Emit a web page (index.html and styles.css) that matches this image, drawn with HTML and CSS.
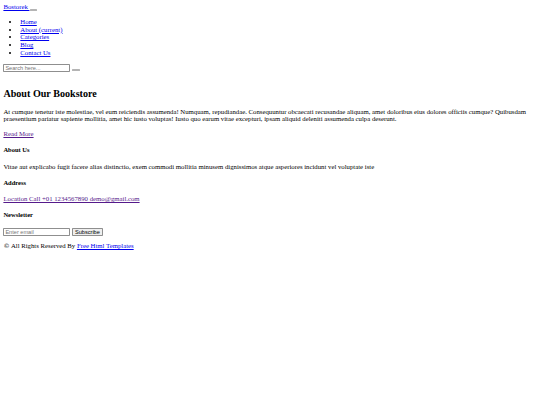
FILE: index.html
```html
<!DOCTYPE html>
<html lang="en">
<head>
<meta charset="utf-8">
<title>Bostorek</title>
<link rel="stylesheet" href="styles.css">
</head>
<body class="page">
<header class="header">
  <nav class="nav">
    <div class="brand-row"><a class="brand link" href="#">Bostorek </a><button class="toggler" type="button"></button></div>
    <ul class="menu">
      <li><a class="link" href="#">Home</a></li>
      <li><a class="link" href="#">About (current)</a></li>
      <li><a class="link" href="#">Categories</a></li>
      <li><a class="link" href="#">Blog</a></li>
      <li><a class="link" href="#">Contact Us</a></li>
    </ul>
    <form class="search">
      <input class="field" type="text" placeholder="Search here..."> <button class="toggler" type="button"></button>
    </form>
  </nav>
</header>
<section class="about">
  <h2 class="about-title">About Our Bookstore</h2>
  <p class="text">At cumque tenetur iste molestiae, vel eum reiciendis assumenda! Numquam, repudiandae. Consequuntur obcaecati recusandae aliquam, amet doloribus eius dolores officiis cumque? Quibusdam praesentium pariatur sapiente mollitia, amet hic iusto voluptas! Iusto quo earum vitae excepturi, ipsam aliquid deleniti assumenda culpa deserunt.</p>
  <a class="link visited" href="#">Read More</a>
</section>
<footer class="footer">
  <h5 class="foot-title">About Us</h5>
  <p class="text">Vitae aut explicabo fugit facere alias distinctio, exem commodi mollitia minusem dignissimos atque asperiores incidunt vel voluptate iste</p>
  <h5 class="foot-title">Address</h5>
  <a class="link visited" href="#">Location Call +01 1234567890 demo@gmail.com</a>
  <h5 class="foot-title">Newsletter</h5>
  <form class="newsletter">
    <input class="field" type="email" placeholder="Enter email"> <button class="subscribe" type="button">Subscribe</button>
  </form>
  <p class="text copy"><span class="copy-mark">©</span> All Rights Reserved By <a class="link" href="#">Free Html Templates</a></p>
</footer>
</body>
</html>
```

FILE: styles.css
```css
html {
  background: #ffffff;
}

.page {
  margin: 3.4px;
  font-family: "Liberation Serif", "Times New Roman", serif;
  font-size: 6.75px;
  line-height: 7.76px;
  color: #000000;
}

.link {
  color: #0000ee;
}

.link.visited {
  color: #551a8b;
}

.toggler {
  display: inline-block;
  width: 7.5px;
  height: 2.4px;
  padding: 0;
  margin: 0 0 0 0.5px;
  border: 0.5px solid #b4b4b4;
  border-radius: 0.5px;
  background: #efefef;
  vertical-align: -0.8px;
}

.menu {
  margin: 6.75px 0;
  padding-left: 16.9px;
}

.search {
  margin: 0;
  line-height: 8.6px;
}

.field {
  box-sizing: border-box;
  width: 66.5px;
  height: 8.3px;
  margin: 0;
  padding: 0 1px;
  font-family: "Liberation Sans", Arial, sans-serif;
  font-size: 5.6px;
  border: 0.6px solid #8f8f8f;
  border-radius: 0.8px;
  vertical-align: baseline;
}

.field::placeholder {
  color: #757575;
}

.about {
  padding-top: 7px;
}

.about-title {
  font-size: 10.125px;
  line-height: 11.64px;
  margin: 8.4px 0;
}

.text {
  margin: 6.75px 0;
}

.foot-title {
  font-size: 6.5px;
  line-height: 6.6px;
  margin: 9.2px 0;
}

.newsletter {
  margin: 0;
  line-height: 8.6px;
}

.subscribe {
  box-sizing: border-box;
  height: 8.1px;
  margin: 0;
  padding: 0 2.4px;
  font-family: "Liberation Sans", Arial, sans-serif;
  font-size: 5.6px;
  line-height: 6px;
  color: #000000;
  background: #efefef;
  border: 0.6px solid #8f8f8f;
  border-radius: 0.8px;
}

.copy {
  margin-top: 5.5px;
}

.copy-mark {
  font-family: "DejaVu Serif", "Liberation Serif", serif;
  font-size: 6.2px;
}
```
